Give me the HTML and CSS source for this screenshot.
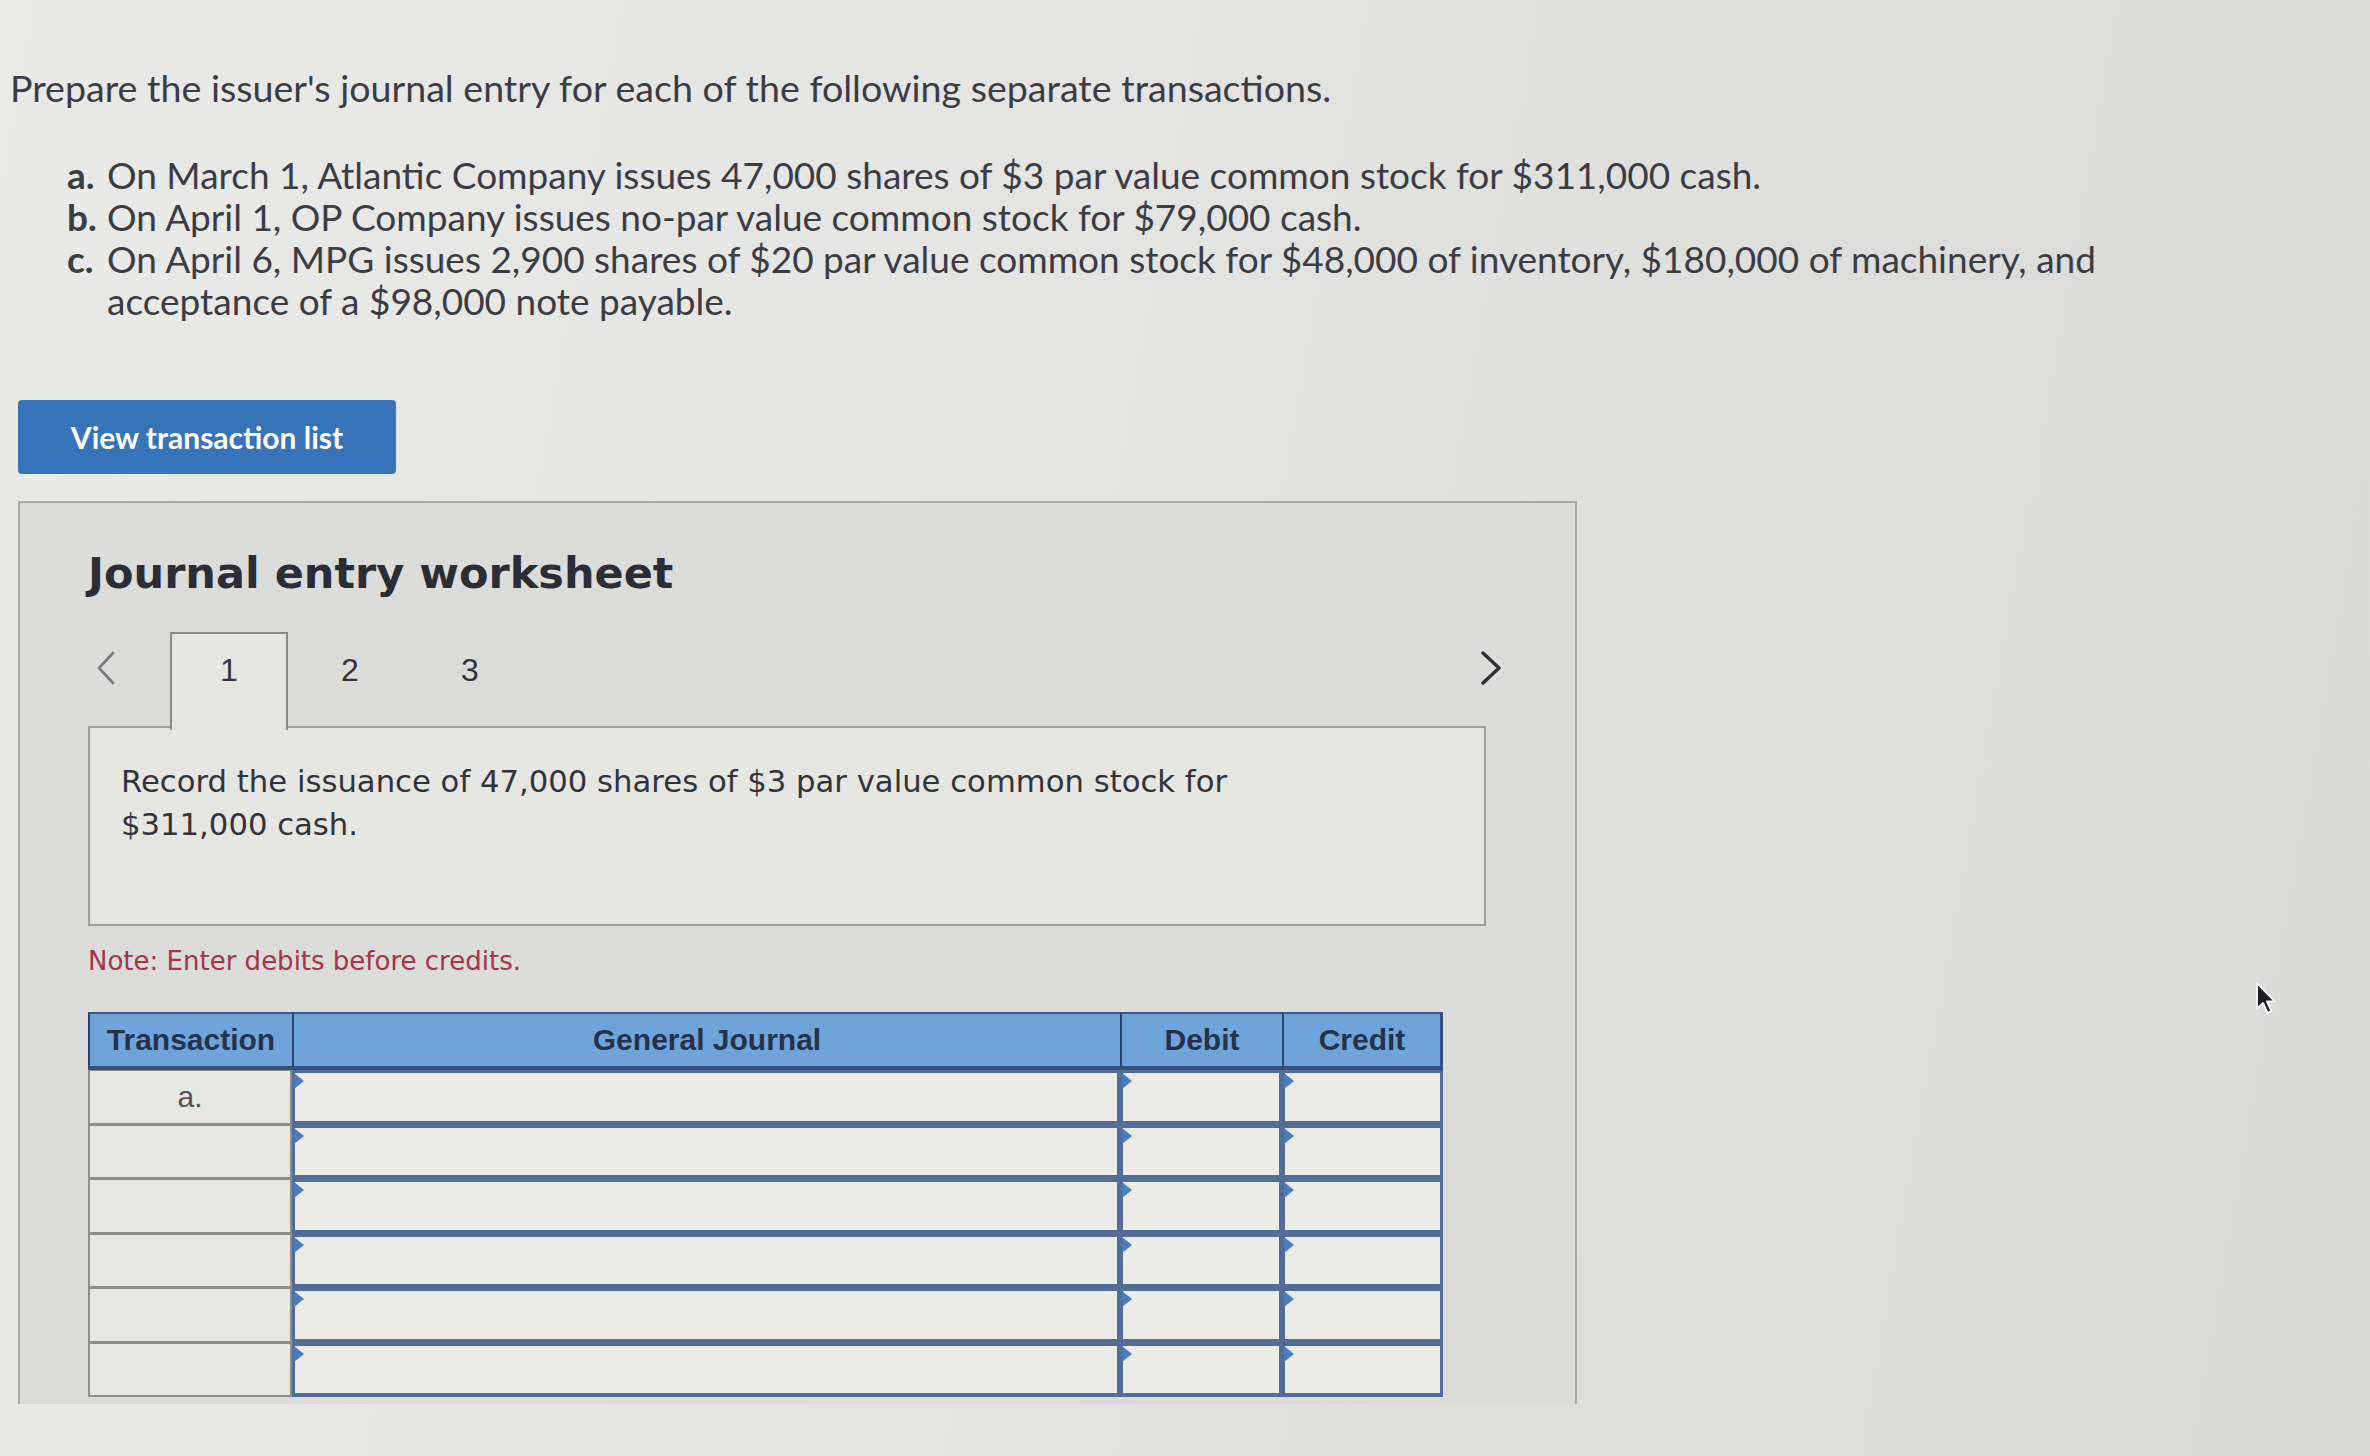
FILE: index.html
```html
<!DOCTYPE html>
<html lang="en">
<head>
<meta charset="utf-8">
<title>Journal entry worksheet</title>
<link rel="stylesheet" href="styles.css">
</head>
<body>
<main class="page">
  <p class="prompt">Prepare the issuer's journal entry for each of the following separate transactions.</p>
  <ol class="tx-list">
    <li><span class="lbl">a.</span><span class="txt">On March 1, Atlantic Company issues 47,000 shares of $3 par value common stock for $311,000 cash.</span></li>
    <li><span class="lbl">b.</span><span class="txt">On April 1, OP Company issues no-par value common stock for $79,000 cash.</span></li>
    <li><span class="lbl">c.</span><span class="txt">On April 6, MPG issues 2,900 shares of $20 par value common stock for $48,000 of inventory, $180,000 of machinery, and acceptance of a $98,000 note payable.</span></li>
  </ol>
  <button class="btn" type="button">View transaction list</button>

  <section class="worksheet">
    <h2 class="ws-title">Journal entry worksheet</h2>
    <div class="tabnav">
      <span class="chev prev">
        <svg width="20" height="34" viewBox="0 0 20 34"><path d="M17 2 L3 17 L17 32" fill="none" stroke="#7a7a7c" stroke-width="2.6" stroke-linecap="round" stroke-linejoin="round"/></svg>
      </span>
      <div class="tabs">
        <span class="tab active">1</span>
        <span class="tab">2</span>
        <span class="tab">3</span>
      </div>
      <span class="chev next">
        <svg width="22" height="34" viewBox="0 0 22 34"><path d="M3 2 L19 17 L3 32" fill="none" stroke="#2f2f36" stroke-width="3.4" stroke-linecap="round" stroke-linejoin="round"/></svg>
      </span>
    </div>
    <div class="desc">
      <p>Record the issuance of 47,000 shares of $3 par value common stock for $311,000 cash.</p>
    </div>
    <p class="note">Note: Enter debits before credits.</p>

    <div class="journal">
      <div class="th">Transaction</div>
      <div class="th">General Journal</div>
      <div class="th">Debit</div>
      <div class="th last">Credit</div>

      <div class="tc">a.</div><div class="ic"></div><div class="ic"></div><div class="ic"></div>
      <div class="tc"></div><div class="ic"></div><div class="ic"></div><div class="ic"></div>
      <div class="tc"></div><div class="ic"></div><div class="ic"></div><div class="ic"></div>
      <div class="tc"></div><div class="ic"></div><div class="ic"></div><div class="ic"></div>
      <div class="tc"></div><div class="ic"></div><div class="ic"></div><div class="ic"></div>
      <div class="tc"></div><div class="ic"></div><div class="ic"></div><div class="ic"></div>
    </div>
  </section>

  <svg class="pointer" width="24" height="36" viewBox="0 0 24 36">
    <path d="M2 2 L2 28 L8 22 L12.5 32 L16.5 30.2 L12 20.5 L20 20.5 Z" fill="#1e1e22" stroke="#f4f4f4" stroke-width="2" stroke-linejoin="round"/>
  </svg>
</main>
</body>
</html>
```

FILE: styles.css
```css
* { box-sizing: border-box; }

html, body {
  margin: 0;
  padding: 0;
}

body {
  width: 2370px;
  height: 1456px;
  overflow: hidden;
  background: linear-gradient(100deg, #eaeae8 0%, #e4e4e2 45%, #dddddb 75%, #dadad8 100%);
  color: #3b3b43;
  font-family: "Lato", "Liberation Sans", sans-serif;
}

.page {
  position: relative;
  padding: 66px 0 0 10px;
  height: 100%;
}

.prompt {
  margin: 0;
  font-size: 37.6px;
  line-height: 44px;
  color: #3c3c44;
}

.tx-list {
  list-style: none;
  margin: 44px 0 0;
  padding: 0 0 0 57px;
  width: 2180px;
  font-size: 37px;
  line-height: 42px;
  color: #3c3c44;
}

.tx-list li {
  display: flex;
}

.tx-list .lbl {
  flex: 0 0 40px;
  font-weight: 700;
}

.btn {
  display: block;
  margin: 78px 0 0 8px;
  width: 378px;
  height: 74px;
  border: none;
  border-radius: 4px;
  background: #3773b8;
  color: #ffffff;
  font-family: "Lato", "Liberation Sans", sans-serif;
  font-weight: 700;
  font-size: 30px;
  padding: 0;
  text-align: center;
}

.worksheet {
  margin: 27px 0 0 8px;
  width: 1559px;
  height: 903px;
  border: 2px solid #a9a9a7;
  border-bottom: none;
  background: #dcdcda;
  padding: 45px 0 0 68px;
}

.ws-title {
  margin: 0;
  font-family: "DejaVu Sans", "Verdana", sans-serif;
  font-weight: 700;
  font-size: 43px;
  line-height: 50px;
  color: #2c2c35;
}

.tabnav {
  margin-top: 34px;
  width: 1414px;
  height: 96px;
  display: flex;
  align-items: flex-start;
  position: relative;
  z-index: 1;
}

.chev {
  display: flex;
  align-items: center;
  height: 72px;
}

.chev.prev {
  margin-left: 8px;
  width: 74px;
}

.chev.next {
  margin-left: auto;
}

.tabs {
  display: flex;
}

.tab {
  width: 120px;
  height: 96px;
  padding-top: 16px;
  text-align: center;
  font-family: "Liberation Sans", "Arial", sans-serif;
  font-size: 32px;
  line-height: 44px;
  color: #33333a;
}

.tab.active {
  border: 2px solid #8a8a8a;
  border-bottom: none;
  background: #e6e6e3;
  padding-top: 14px;
  width: 118px;
  margin-right: 2px;
  height: 98px;
}

.desc {
  margin-top: -2px;
  width: 1398px;
  height: 200px;
  border: 2px solid #9e9e9c;
  background: #e6e6e3;
  padding: 32px 30px 0 31px;
}

.desc p {
  margin: 0;
  max-width: 1160px;
  font-family: "DejaVu Sans", "Verdana", sans-serif;
  font-size: 30.7px;
  line-height: 43px;
  color: #33333a;
}

.note {
  margin: 20px 0 0;
  font-family: "DejaVu Sans", "Verdana", sans-serif;
  font-size: 26px;
  line-height: 30px;
  color: #a3344a;
}

.journal {
  margin-top: 36px;
  display: grid;
  grid-template-columns: 204px 828px 162px 161px;
  grid-template-rows: 58px repeat(6, 54.5px);
  width: 1355px;
}

.th {
  background: #6fa4da;
  border-top: 2px solid #3f5a84;
  border-left: 2px solid #2c466f;
  border-bottom: 4px solid #34507c;
  display: flex;
  align-items: center;
  justify-content: center;
  font-family: "Liberation Sans", "Arial", sans-serif;
  font-weight: 700;
  font-size: 30px;
  color: #25324a;
}

.th.last {
  border-right: 3px solid #34507c;
}

.tc {
  background: #e7e7e4;
  border: 2px solid #8e8e8c;
  border-top-width: 1px;
  border-bottom-width: 2px;
  display: flex;
  align-items: center;
  justify-content: center;
  font-family: "Liberation Sans", "Arial", sans-serif;
  font-size: 30px;
  color: #55555a;
}

.ic {
  position: relative;
  background: #ebebe8;
  border: 3px solid #536d97;
  border-top-width: 3px;
  border-bottom-width: 4px;
}

.ic::before {
  content: "";
  position: absolute;
  left: -1px;
  top: 0;
  border-top: 8px solid transparent;
  border-bottom: 8px solid transparent;
  border-left: 10px solid #4a7cc0;
}

.pointer {
  position: absolute;
  left: 2255px;
  top: 981px;
}
```
